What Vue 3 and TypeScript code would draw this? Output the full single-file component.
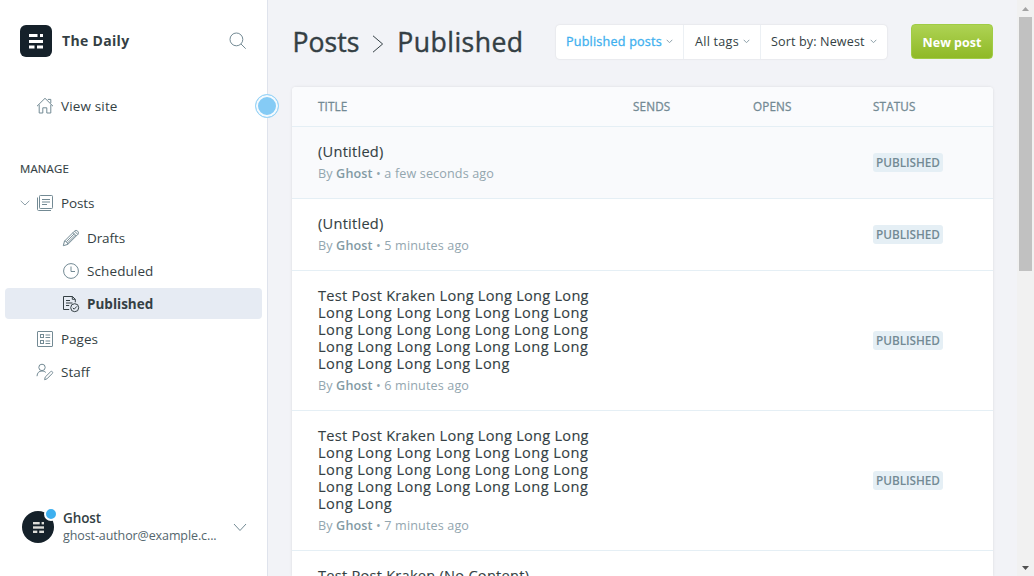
<script setup lang="ts">
interface Post {
  lines: string[]
  time: string
  active?: boolean
}

const seven = 'Long Long Long Long Long Long Long'

const posts: Post[] = [
  { lines: ['(Untitled)'], time: 'a few seconds ago', active: true },
  { lines: ['(Untitled)'], time: '5 minutes ago' },
  {
    lines: ['Test Post Kraken Long Long Long Long', seven, seven, seven, 'Long Long Long Long Long'],
    time: '6 minutes ago',
  },
  {
    lines: ['Test Post Kraken Long Long Long Long', seven, seven, seven, 'Long Long'],
    time: '7 minutes ago',
  },
  { lines: ['Test Post Kraken (No Content)'], time: '8 minutes ago' },
]
</script>

<template>
  <div class="app">
    <aside class="sidebar">
      <header class="brand">
        <div class="logo">
          <svg width="14" height="15" viewBox="0 0 14 15" fill="#fff">
            <rect x="0" y="0" width="8.5" height="3" /><rect x="11" y="0" width="3" height="3" />
            <rect x="0" y="6" width="14" height="3" />
            <rect x="0" y="11.5" width="5.5" height="3" /><rect x="8" y="11.5" width="6" height="3" />
          </svg>
        </div>
        <span class="site-name">The Daily</span>
        <svg class="search" width="18" height="18" viewBox="0 0 18 18">
          <circle cx="7.4" cy="7.4" r="6.4" /><path d="M12 12l4.7 4.7" />
        </svg>
      </header>

      <nav>
        <a class="item view-site">
          <svg class="icon" width="18" height="18" viewBox="0 0 18 18">
            <path d="M1 9.2L9 1.3l8 7.9M3.2 7.6V16h3.6v-5.2h4V16h4V7.6M11.8 2.4h3V6" />
          </svg>
          <span>View site</span>
        </a>
        <div class="section">Manage</div>
        <a class="item posts">
          <svg class="caret" width="10" height="6" viewBox="0 0 10 6"><path d="M.7.8L5 5 9.3.8" /></svg>
          <svg class="icon" width="18" height="18" viewBox="0 0 18 18">
            <rect x="3.5" y="1.5" width="13" height="13" rx=".8" />
            <path d="M1.5 3.5v12c0 .6.4 1 1 1h12.5M6 5.5h8M6 8h8M6 10.5h5" />
          </svg>
          <span>Posts</span>
        </a>
        <a class="item sub drafts">
          <svg class="icon" width="18" height="18" viewBox="0 0 18 18">
            <path d="M1.3 16.7l1.2-4.6L12.3 2.3c1.1-1.1 2.4-1.1 3.4-.1s1 2.3-.1 3.4L5.8 15.4zM2.5 12.1c1.7.1 3.2 1.5 3.3 3.3M11 3.6l3.4 3.4M12.5 2.1l3.4 3.4M4.4 12.7l7.9-7.9M5.6 13.9l7.8-7.8" />
          </svg>
          <span>Drafts</span>
        </a>
        <a class="item sub">
          <svg class="icon" width="18" height="18" viewBox="0 0 18 18">
            <circle cx="9" cy="9" r="7.4" /><path d="M9 4.5V9.5h4" />
          </svg>
          <span class="scheduled">Scheduled</span>
        </a>
        <a class="item sub current">
          <svg class="icon" width="18" height="18" viewBox="0 0 18 18">
            <path d="M7.2 14.5H1.5v-13h9l2.8 2.8v3M10.3 1.5v2.8h3M4 5.5h4M4 8h6.5M4 10.5h3.2" />
            <circle cx="12.7" cy="12.7" r="4" /><path d="M10.8 12.8l1.4 1.4 2.6-2.8" />
          </svg>
          <span>Published</span>
        </a>
        <a class="item pages">
          <svg class="icon" width="18" height="18" viewBox="0 0 18 18">
            <rect x="1.5" y="1.5" width="15" height="15" rx=".5" />
            <rect x="4.5" y="4.5" width="3" height="3" /><rect x="4.5" y="10.5" width="3" height="3" />
            <path d="M9.5 5h4.7M9.5 7.5h4.7M9.5 11h4.7M9.5 13.5h4.7" />
          </svg>
          <span>Pages</span>
        </a>
        <a class="item">
          <svg class="icon" width="18" height="18" viewBox="0 0 18 18">
            <circle cx="6" cy="4.4" r="3.2" />
            <path d="M1 13.2C1.2 9.8 3 8 6 8c1.6 0 2.9.5 3.8 1.5M8.6 16.7l.6-2.6 5.3-5.3c.6-.6 1.3-.6 1.8-.1s.5 1.3-.1 1.9l-5.3 5.3z" />
          </svg>
          <span>Staff</span>
        </a>
      </nav>

      <footer class="user">
        <div class="avatar">
          <svg width="11" height="11" viewBox="0 0 11.5 11.5" fill="#dcdcd8">
            <rect width="7" height="2.5" /><rect x="9" width="2.5" height="2.5" />
            <rect y="4.5" width="11.5" height="2.5" />
            <rect y="9" width="4.5" height="2.5" /><rect x="6.5" y="9" width="5" height="2.5" />
          </svg>
          <i class="notice"></i>
        </div>
        <div class="who">
          <div class="name">Ghost</div>
          <div class="mail">ghost-author@example.c...</div>
        </div>
        <svg class="chev" width="14" height="9" viewBox="0 0 14 9"><path d="M1 1l6 6.5L13 1" /></svg>
      </footer>
      <i class="handle"></i>
    </aside>

    <main class="main">
      <header class="top">
        <h1>
          <span>Posts</span>
          <svg width="12" height="18" viewBox="0 0 12 18"><path d="M1 .8L10.6 9 1 17.2" /></svg>
          <span class="leaf">Published</span>
        </h1>
        <div class="filters">
          <div class="filter f1"><span>Published posts</span><svg width="7" height="5" viewBox="0 0 7 5"><path d="M.7.8l2.8 2.9L6.3.8" /></svg></div>
          <div class="filter f2"><span>All tags</span><svg width="7" height="5" viewBox="0 0 7 5"><path d="M.7.8l2.8 2.9L6.3.8" /></svg></div>
          <div class="filter f3"><span>Sort by: Newest</span><svg width="7" height="5" viewBox="0 0 7 5"><path d="M.7.8l2.8 2.9L6.3.8" /></svg></div>
        </div>
        <button class="new">New post</button>
      </header>

      <section class="table">
        <div class="row head"><span>Title</span><span>Sends</span><span>Opens</span><span>Status</span></div>
        <div v-for="(post, i) in posts" :key="i" class="row" :class="{ active: post.active }">
          <div>
            <div class="title">
              <span v-for="(line, n) in post.lines" :key="n" :class="{ continued: n > 0 }">{{ line }}</span>
            </div>
            <div class="meta">By <b>Ghost</b> • {{ post.time }}</div>
          </div>
          <span></span>
          <span></span>
          <div><span class="badge">Published</span></div>
        </div>
      </section>
    </main>

    <div class="scrollbar">
      <svg width="17" height="17" viewBox="0 0 17 17"><path d="M5 11l3.5-4 3.5 4z" fill="#a3a3a3" /></svg>
      <div class="thumb"></div>
      <svg width="17" height="17" viewBox="0 0 17 17"><path d="M5 7l3.5 4 3.5-4z" fill="#505050" /></svg>
    </div>
  </div>
</template>

<style>
body {
  overflow: hidden;
}
</style>

<style scoped>
* {
  box-sizing: border-box;
}
.app {
  display: flex;
  width: 1034px;
  height: 576px;
  overflow: hidden;
  background: #f2f3f7;
  color: #343f44;
  font-family: "Open Sans", "Noto Sans", sans-serif;
  font-size: 13.5px;
}
svg {
  display: block;
  flex: none;
}
.sidebar {
  position: relative;
  display: flex;
  flex-direction: column;
  flex: none;
  width: 268px;
  background: #fff;
  border-right: 1px solid #dfe3ec;
}
.brand {
  display: flex;
  align-items: center;
  height: 82px;
  padding: 0 20px;
}
.logo {
  display: grid;
  place-items: center;
  width: 32px;
  height: 32px;
  border-radius: 6px;
  background: #15212a;
}
.site-name {
  margin-left: 10px;
  padding-bottom: 2px;
  font-size: 14px;
  font-weight: 700;
  letter-spacing: 0.33px;
}
.search {
  margin-left: auto;
}
.search, .icon {
  fill: none;
  stroke: #738a94;
  stroke-width: 1;
}
.item {
  display: flex;
  align-items: center;
  height: 33px;
  padding-left: 36px;
  white-space: nowrap;
}
.item span {
  margin-left: 7px;
}
.view-site {
  margin-top: 7px;
  letter-spacing: 0.15px;
}
.scheduled {
  letter-spacing: 0.1px;
}
.section {
  height: 18px;
  margin: 38px 0 8px 20px;
  font-size: 11.4px;
  letter-spacing: 0.2px;
  line-height: 18px;
  text-transform: uppercase;
  -webkit-text-stroke: 0.15px;
}
.item.posts {
  padding-left: 20px;
  letter-spacing: -0.15px;
}
.caret {
  margin-right: 6px;
  fill: none;
  stroke: #8fa1aa;
}
.sub {
  padding-left: 62px;
}
.drafts {
  margin-top: 2px;
  letter-spacing: -0.1px;
}
.current {
  height: 31px;
  margin: 1px 5px;
  padding-left: 57px;
  border-radius: 4px;
  background: #e6ebf3;
  font-weight: 700;
}
.current span {
  padding-top: 1px;
}
.current .icon {
  stroke: #343f44;
}
.pages {
  margin-top: 3px;
}
.user {
  display: flex;
  align-items: center;
  height: 34px;
  margin: auto 20px 32px 22px;
}
.avatar {
  position: relative;
  display: grid;
  place-items: center;
  width: 32px;
  height: 32px;
  border-radius: 50%;
  background: #15212a;
}
.notice {
  position: absolute;
  top: -4px;
  left: 22px;
  width: 14px;
  height: 14px;
  border: 2px solid #fff;
  border-radius: 50%;
  background: #3eb0ef;
}
.who {
  margin-left: 9px;
  line-height: 17px;
  white-space: nowrap;
}
.name {
  font-weight: 600;
  letter-spacing: -0.1px;
}
.mail {
  font-size: 12.5px;
  letter-spacing: -0.1px;
  color: #54666d;
}
.chev {
  margin-left: auto;
  fill: none;
  stroke: #738a94;
}
.handle {
  position: absolute;
  top: 94px;
  left: 255px;
  z-index: 2;
  width: 24px;
  height: 24px;
  border: 1.5px solid #9bd5f7;
  border-radius: 50%;
  background: #85cbf5;
  box-shadow: inset 0 0 0 2px #f4fafe;
}
.main {
  flex: 1;
  min-width: 0;
  padding: 0 24px;
}
.top {
  display: flex;
  align-items: center;
  height: 87px;
  padding-bottom: 4px;
}
h1 {
  display: flex;
  align-items: center;
  margin: 0 0 0 0.5px;
  font-size: 26.6px;
  font-weight: 400;
  white-space: nowrap;
  -webkit-text-stroke: 0.4px;
}
h1 svg {
  position: relative;
  top: 2px;
  margin: 0 13px;
  fill: none;
  stroke: #343f44;
}
.leaf {
  letter-spacing: 0.45px;
}
.filters {
  display: flex;
  height: 34px;
  margin-left: auto;
  border-radius: 4px;
  background: #fff;
  box-shadow: 0 0 2px rgba(0, 0, 0, 0.12);
  font-size: 12.6px;
}
.filter {
  display: flex;
  align-items: center;
  justify-content: space-between;
  padding: 0 10px;
  white-space: nowrap;
}
.filter svg {
  fill: none;
  stroke: #8fa1aa;
}
.f1 {
  width: 128px;
  border-right: 1px solid #ecf0f4;
  color: #3eb0ef;
  letter-spacing: 0.2px;
  -webkit-text-stroke: 0.3px;
}
.f2 {
  width: 77px;
  padding-left: 11px;
  border-right: 1px solid #ecf0f4;
  letter-spacing: 0.25px;
}
.f3 {
  width: 126px;
  letter-spacing: 0.12px;
}
.new {
  width: 82px;
  height: 35px;
  margin-left: 24px;
  padding: 2px 0 0;
  border: 1px solid #a0cc45;
  border-radius: 4px;
  background: linear-gradient(#aed354, #8fb926);
  color: #fff;
  font: 700 12.5px "Open Sans", sans-serif;
  white-space: nowrap;
}
.table {
  height: 489px;
  overflow: hidden;
  border-radius: 4px 4px 0 0;
  background: #fff;
  box-shadow: 0 0 3px rgba(0, 0, 0, 0.1);
}
.row {
  display: grid;
  grid-template-columns: 315px 120px 120px 120px;
  align-items: center;
  padding: 16px 0 16px 26px;
  border-bottom: 1px solid #e5eff5;
}
.active {
  background: #f9fafc;
}
.head {
  height: 40px;
  padding-top: 0;
  padding-bottom: 1px;
  background: #fafbfd;
  color: #738a94;
  font-size: 11.7px;
  letter-spacing: 0.15px;
  text-transform: uppercase;
  -webkit-text-stroke: 0.3px;
}
.title span {
  display: block;
  font-size: 14.6px;
  letter-spacing: 0.25px;
  line-height: 17px;
  white-space: nowrap;
  -webkit-text-stroke: 0.12px;
}
.title .continued {
  letter-spacing: 0.43px;
}
.meta {
  margin-top: 5px;
  height: 17px;
  color: #93a6af;
  font-size: 12.6px;
  letter-spacing: 0.13px;
  line-height: 17px;
}
.meta b {
  color: #839aa4;
  font-weight: 600;
}
.badge {
  display: block;
  width: 70px;
  height: 19px;
  border-radius: 3px;
  background: #e5eff5;
  color: #738a94;
  font-size: 11.8px;
  font-weight: 600;
  letter-spacing: -0.05px;
  line-height: 18.5px;
  text-align: center;
  text-transform: uppercase;
}
.scrollbar {
  display: flex;
  flex-direction: column;
  flex: none;
  width: 17px;
  background: #f1f1f1;
}
.thumb {
  width: 13px;
  height: 254px;
  margin: 0 2px auto;
  background: #c1c1c1;
}
</style>
